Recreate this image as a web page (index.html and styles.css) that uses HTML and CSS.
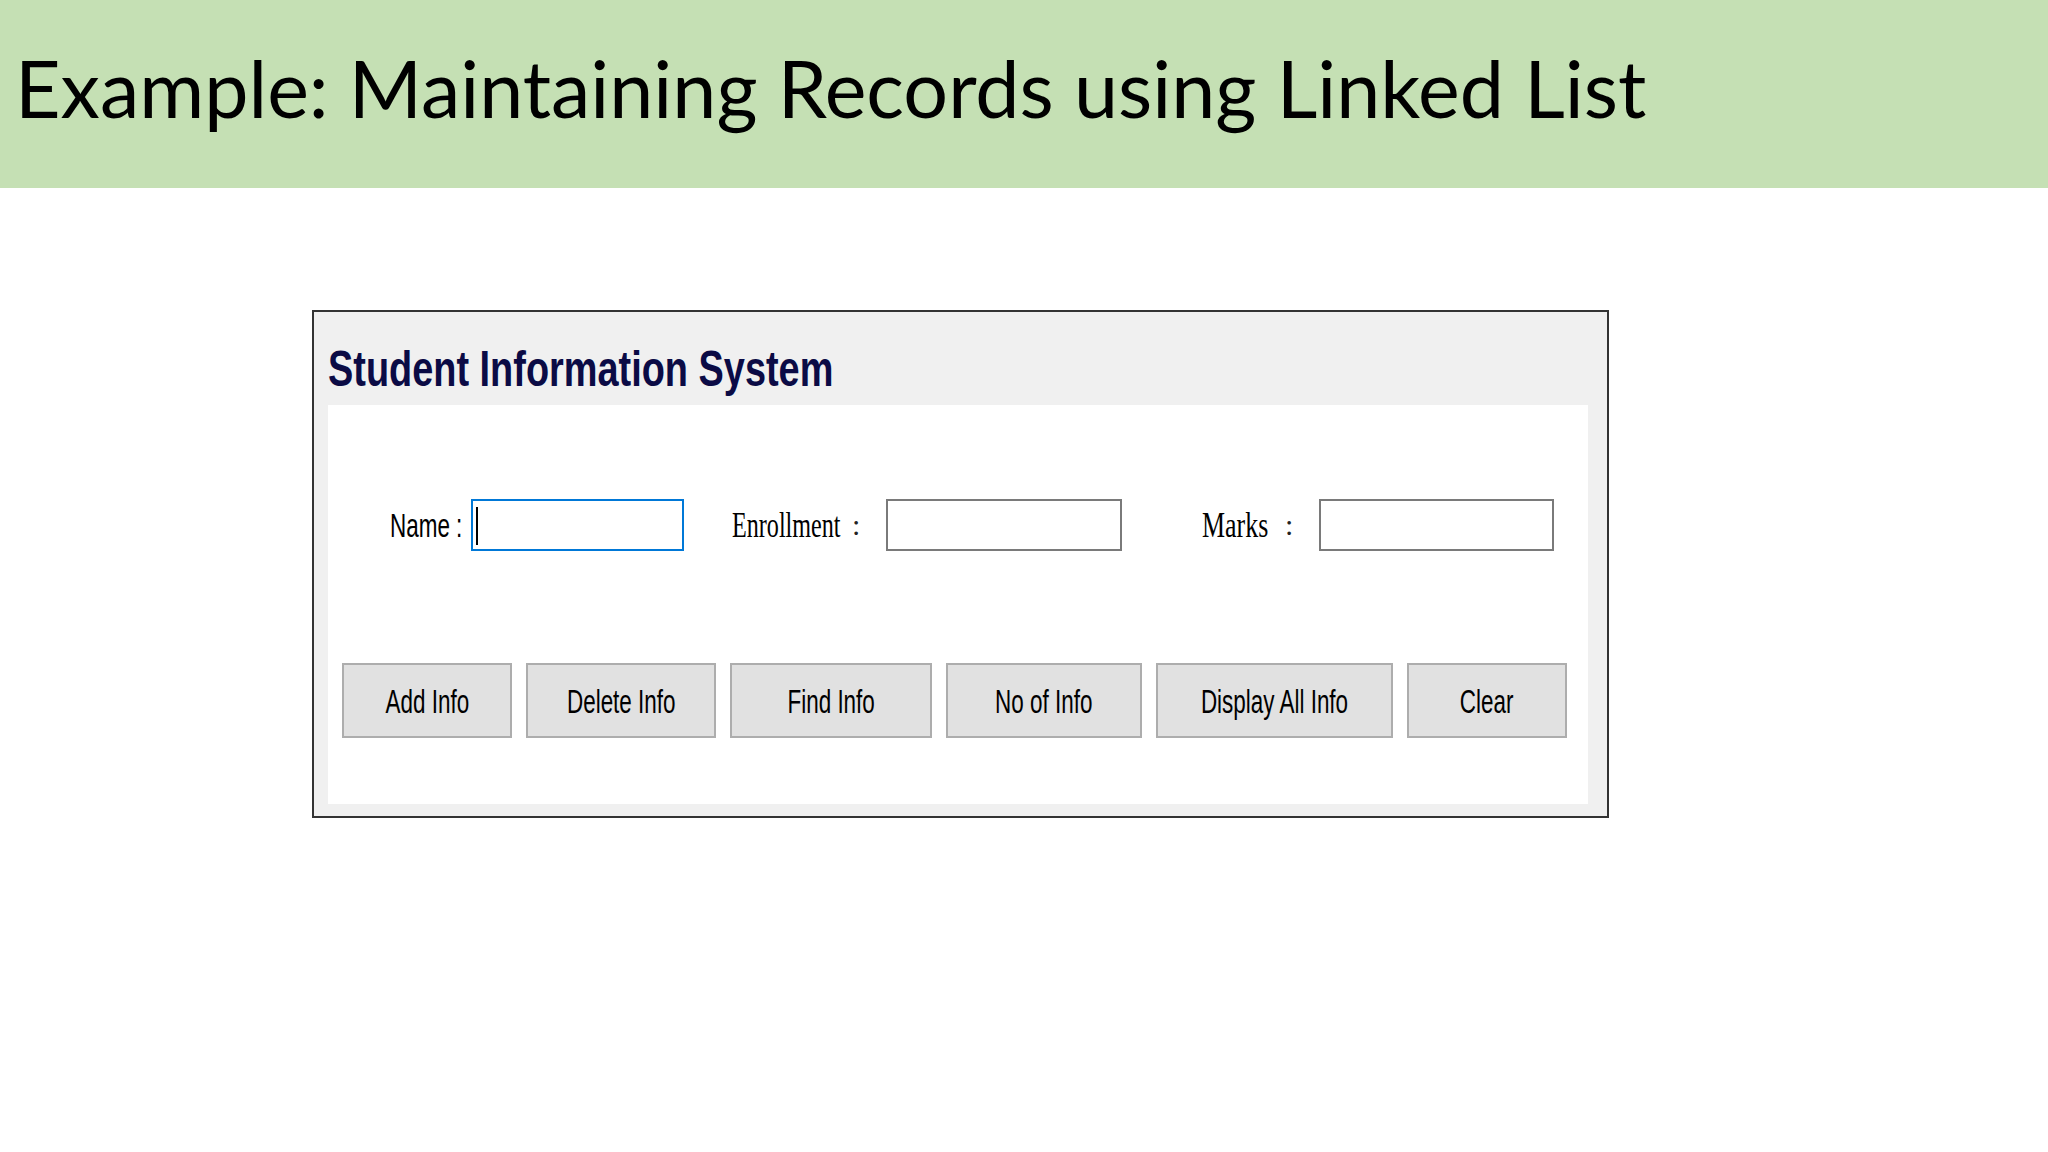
FILE: index.html
```html
<!DOCTYPE html>
<html lang="en">
<head>
<meta charset="utf-8">
<title>Example: Maintaining Records using Linked List</title>
<link rel="stylesheet" href="styles.css">
</head>
<body>
<header class="banner">
  <h1 class="banner-title">Example: Maintaining Records using Linked List</h1>
</header>
<main class="stage">
  <section class="form-window">
    <h2 class="form-title"><span class="sx sx-title">Student Information System</span></h2>
    <div class="form-panel">
      <div class="fields">
        <label class="lbl lbl-name"><span class="sx sx-sans">Name :</span></label>
        <div class="textbox textbox-focus tb-name"><span class="caret"></span></div>
        <label class="lbl lbl-enr"><span class="word word-enr"><span class="sx sx-serif">Enrollment</span></span><span class="colon">:</span></label>
        <div class="textbox tb-enr"></div>
        <label class="lbl lbl-marks"><span class="word word-marks"><span class="sx sx-serif sx-marks">Marks</span></span><span class="colon">:</span></label>
        <div class="textbox tb-marks"></div>
      </div>
      <div class="actions">
        <button class="btn btn-add"><span class="sx sx-btn">Add Info</span></button>
        <button class="btn btn-delete"><span class="sx sx-btn">Delete Info</span></button>
        <button class="btn btn-find"><span class="sx sx-btn">Find Info</span></button>
        <button class="btn btn-count"><span class="sx sx-btn">No of Info</span></button>
        <button class="btn btn-display"><span class="sx sx-btn">Display All Info</span></button>
        <button class="btn btn-clear"><span class="sx sx-btn">Clear</span></button>
      </div>
    </div>
  </section>
</main>
</body>
</html>
```

FILE: styles.css
```css
html, body {
  margin: 0;
  padding: 0;
  background: #ffffff;
}

body {
  width: 2048px;
  height: 1152px;
  overflow: hidden;
  font-family: "Liberation Sans", Arial, sans-serif;
}

.banner {
  height: 188px;
  background: #c5e0b4;
  box-sizing: border-box;
  padding: 48px 0 0 15px;
}

.banner-title {
  margin: 0;
  font-family: Lato, "Open Sans", sans-serif;
  font-weight: 400;
  font-size: 79px;
  line-height: 79px;
  color: #000000;
  white-space: nowrap;
}

.stage {
  padding: 122px 0 0 312px;
}

.form-window {
  width: 1297px;
  height: 508px;
  box-sizing: border-box;
  border: 2px solid #333333;
  background: #f0f0f0;
}

.form-title {
  margin: 0 0 11px 0;
  padding: 32px 0 0 14px;
  height: 50px;
  font-weight: normal;
}

.sx {
  display: inline-block;
  white-space: nowrap;
  transform-origin: left center;
}

.sx-title {
  font-family: "Liberation Sans", Arial, sans-serif;
  font-weight: bold;
  font-size: 50px;
  line-height: 50px;
  color: #0b0b45;
  transform: scaleX(0.758);
}

.sx-sans {
  font-family: "Liberation Sans", Arial, sans-serif;
  font-size: 34px;
  line-height: 34px;
  color: #000000;
  transform: scaleX(0.66);
}

.sx-serif {
  font-family: "Liberation Serif", "Times New Roman", serif;
  font-size: 36px;
  line-height: 36px;
  color: #000000;
  transform: scaleX(0.67);
}

.sx-marks {
  transform: scaleX(0.72);
}

.form-panel {
  margin: 0 19px 0 14px;
  height: 399px;
  box-sizing: border-box;
  background: #ffffff;
  padding-top: 94px;
}

.fields {
  display: flex;
  align-items: center;
  height: 52px;
  padding-left: 62px;
}

.lbl {
  display: flex;
  align-items: center;
  height: 52px;
}

.lbl-name {
  width: 81px;
}

.lbl-enr {
  width: 154px;
  margin-left: 48px;
}

.lbl-marks {
  width: 117px;
  margin-left: 80px;
}

.word {
  display: block;
  overflow: visible;
}

.word-enr {
  width: 120px;
}

.word-marks {
  width: 83px;
}

.colon {
  font-family: "Liberation Serif", "Times New Roman", serif;
  font-size: 30px;
  line-height: 36px;
  color: #222222;
}

.textbox {
  height: 52px;
  box-sizing: border-box;
  border: 2px solid #7a7a7a;
  background: #ffffff;
}

.textbox-focus {
  border-color: #0078d7;
  padding: 6px 0 0 3px;
}

.caret {
  display: block;
  width: 2px;
  height: 38px;
  background: #000000;
}

.tb-name {
  width: 213px;
}

.tb-enr {
  width: 236px;
}

.tb-marks {
  width: 235px;
}

.actions {
  display: flex;
  gap: 14px;
  margin-top: 112px;
  padding-left: 14px;
}

.btn {
  height: 75px;
  box-sizing: border-box;
  border: 2px solid #adadad;
  background: #e1e1e1;
  padding: 0;
  margin: 0;
  display: flex;
  align-items: center;
  justify-content: center;
  overflow: visible;
}

.sx-btn {
  font-family: "Liberation Sans", Arial, sans-serif;
  font-size: 34px;
  line-height: 34px;
  color: #000000;
  transform: scaleX(0.66);
  transform-origin: center center;
}

.btn-add { width: 170px; }
.btn-delete { width: 190px; }
.btn-find { width: 202px; }
.btn-count { width: 196px; }
.btn-display { width: 237px; }
.btn-clear { width: 160px; }
```
